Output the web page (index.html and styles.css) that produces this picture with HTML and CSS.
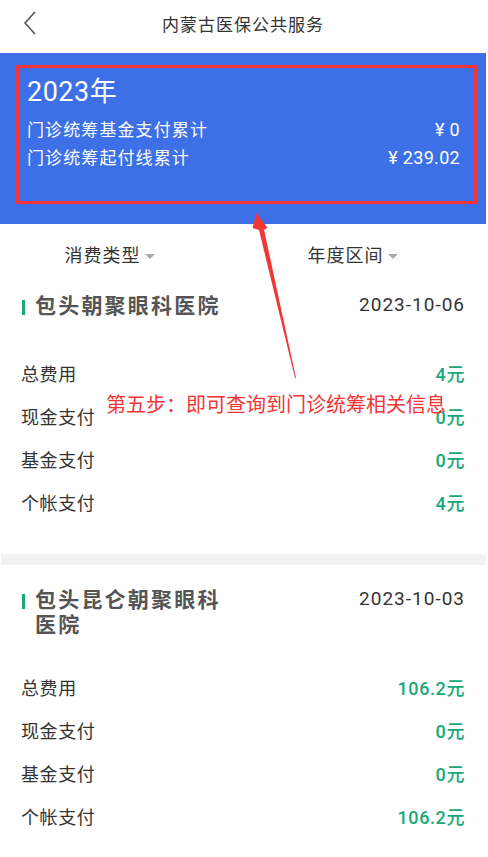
FILE: index.html
```html
<!DOCTYPE html>
<html lang="zh">
<head>
<meta charset="utf-8">
<title>内蒙古医保公共服务</title>
<link rel="stylesheet" href="styles.css">
</head>
<body>
<div class="page">
  <header class="topbar">
    <svg class="back" width="14" height="24" viewBox="0 0 14 24"><polyline points="12,1 2,12 12,23" fill="none" stroke="#555" stroke-width="1.6"/></svg>
    <h1 class="title">内蒙古医保公共服务</h1>
  </header>

  <section class="summary">
    <div class="summary-box">
      <div class="year">2023年</div>
      <div class="sum-row"><span>门诊统筹基金支付累计</span><span class="amt">¥ 0</span></div>
      <div class="sum-row"><span>门诊统筹起付线累计</span><span class="amt">¥ 239.02</span></div>
    </div>
  </section>

  <nav class="filters">
    <div class="filter">消费类型<span class="caret"></span></div>
    <div class="filter">年度区间<span class="caret"></span></div>
  </nav>

  <article class="card">
    <div class="card-head">
      <div class="hosp"><span class="bar"></span><span class="hosp-name">包头朝聚眼科医院</span></div>
      <div class="date">2023-10-06</div>
    </div>
    <div class="row"><span>总费用</span><span class="val">4元</span></div>
    <div class="row"><span>现金支付</span><span class="val">0元</span></div>
    <div class="row"><span>基金支付</span><span class="val">0元</span></div>
    <div class="row"><span>个帐支付</span><span class="val">4元</span></div>
  </article>

  <div class="sep"></div>

  <article class="card">
    <div class="card-head">
      <div class="hosp"><span class="bar"></span><span class="hosp-name">包头昆仑朝聚眼科医院</span></div>
      <div class="date">2023-10-03</div>
    </div>
    <div class="row"><span>总费用</span><span class="val">106.2元</span></div>
    <div class="row"><span>现金支付</span><span class="val">0元</span></div>
    <div class="row"><span>基金支付</span><span class="val">0元</span></div>
    <div class="row"><span>个帐支付</span><span class="val">106.2元</span></div>
  </article>

  <svg class="arrow" width="488" height="400" viewBox="0 0 488 400">
    <polygon points="256.5,213 267.5,228 264,229.5 296,378 295,378 259,230 252.5,228" fill="#f23535"/>
  </svg>
  <div class="note">第五步：即可查询到门诊统筹相关信息</div>
</div>
</body>
</html>
```

FILE: styles.css
```css
* { box-sizing: border-box; margin: 0; padding: 0; }
html, body { background: #fff; }
body {
  font-family: "Roboto", "Noto Sans CJK SC", sans-serif;
  color: #333;
}
.page {
  position: relative;
  width: 486px;
  height: 857px;
  overflow: hidden;
}
.topbar {
  height: 53px;
  display: flex;
  align-items: center;
  justify-content: center;
  position: relative;
}
.back {
  position: absolute;
  left: 23px;
  top: 11px;
}
.title {
  font-size: 17px;
  font-weight: 400;
  color: #333;
  letter-spacing: 1px;
  margin-top: -7px;
}
.summary {
  background: #3d6fe6;
  padding: 12px 9px 20px 16px;
}
.summary-box {
  border: 3px solid #f5333a;
  height: 139px;
  padding: 8px 14px 0 8px;
  color: #fff;
}
.year {
  font-size: 27px;
  line-height: 32px;
  margin-bottom: 8px;
  letter-spacing: 0.5px;
}
.sum-row {
  display: flex;
  justify-content: space-between;
  align-items: center;
  font-size: 17px;
  line-height: 28px;
  letter-spacing: 1.1px;
}
.amt {
  font-size: 18px;
  letter-spacing: 0.3px;
}
.filters {
  display: grid;
  grid-template-columns: 219px 1fr;
  height: 47px;
  padding-top: 16px;
}
.filter {
  display: flex;
  justify-content: center;
  align-items: center;
  font-size: 18px;
  line-height: 22px;
  color: #333;
  letter-spacing: 1px;
}
.caret {
  display: inline-block;
  width: 0; height: 0;
  border-left: 5px solid transparent;
  border-right: 5px solid transparent;
  border-top: 5px solid #aaa;
  margin-left: 4px;
  margin-top: 2px;
}
.card {
  padding: 23px 21px 31px 21px;
}
.card-head {
  display: flex;
  justify-content: space-between;
  align-items: flex-start;
  min-height: 57px;
  padding-bottom: 27px;
}
.hosp {
  display: flex;
  align-items: flex-start;
}
.bar {
  width: 3px;
  height: 15px;
  background: #1aaa78;
  margin: 6px 10px 0 1px;
  flex: none;
}
.hosp-name {
  font-size: 21px;
  font-weight: 700;
  line-height: 25px;
  color: #555;
  width: 196px;
  letter-spacing: 2.2px;
}
.date {
  font-size: 19px;
  line-height: 22px;
  color: #333;
  letter-spacing: 1px;
}
.row {
  height: 43px;
  display: flex;
  justify-content: space-between;
  align-items: center;
  font-size: 18px;
  color: #333;
  letter-spacing: 0.6px;
}
.val {
  color: #1aa879;
  font-weight: 500;
}
.sep {
  height: 11px;
  background: #f2f2f2;
  margin-left: 1px;
}
.arrow {
  position: absolute;
  left: 0;
  top: 0;
  pointer-events: none;
}
.note {
  position: absolute;
  left: 106px;
  top: 391px;
  font-size: 20px;
  line-height: 26px;
  color: #f23535;
  white-space: nowrap;
  font-family: "Noto Sans CJK SC", sans-serif;
}
```
